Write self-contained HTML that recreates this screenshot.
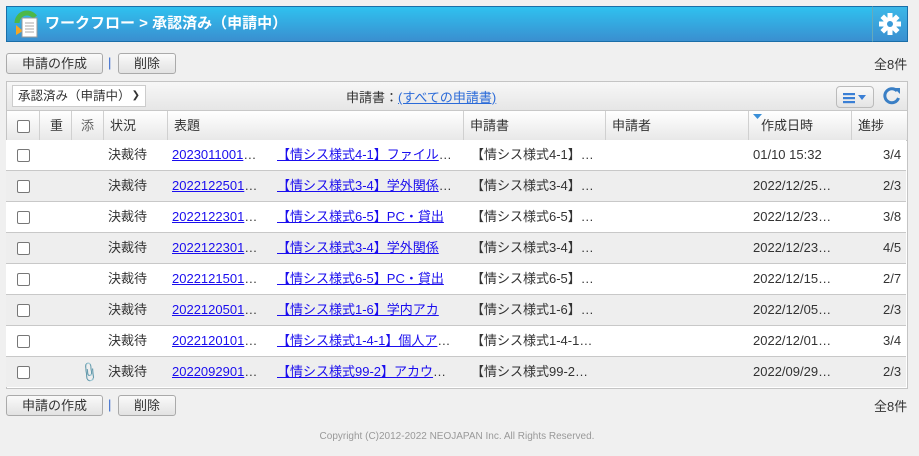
<!DOCTYPE html>
<html><head><meta charset="utf-8"><style>
*{box-sizing:border-box;margin:0;padding:0}
body{width:919px;height:456px;background:#f0f0f0;font-family:"Liberation Sans","Noto Sans CJK JP",sans-serif;font-size:13px;color:#333;position:relative;overflow:hidden}
.a{position:absolute}
.hdr{left:6px;top:6px;width:866px;height:36px;background:linear-gradient(#2fc1ef,#3a8fd0);border:1px solid #1a6ea8;border-right:none}
.gear{left:872px;top:6px;width:36px;height:36px;background:linear-gradient(#3bb8e8,#3a8fd0);border:1px solid #1a6ea8;border-left:1px solid #6ab;}
.ttl{left:45px;top:12px;color:#fff;font-weight:bold;font-size:15px}
.btn{height:21px;border:1px solid #aaa;border-radius:3px;background:linear-gradient(#fafafa,#e2e2e2);text-align:center;line-height:19px;color:#333}
.sep{color:#3366cc}
.tbl{left:6px;top:81px;width:902px;height:308px;border:1px solid #c4c4c4;background:#fff}
.tb{left:0;top:0;width:900px;height:29px;background:linear-gradient(#f7f7f7,#e6e6e6);border-bottom:1px solid #c8c8c8}
.th{left:0;top:29px;width:900px;height:30px;background:linear-gradient(#fff,#e8e8e8);border-bottom:1px solid #c8c8c8}
.th div{position:absolute;top:0;height:29px;line-height:29px;border-left:1px solid #d0d0d0;padding-left:6px}
.row{left:0;width:900px;height:31px;border-bottom:1px solid #c8c8c8;line-height:30px}
.row span{position:absolute;top:0;white-space:nowrap}
.cb{width:13px;height:13px;border:1px solid #777;border-radius:2px;background:#fff;position:absolute}
a{color:#1a0dee;text-decoration:underline}
</style></head><body>
<div class="a hdr"></div>
<div class="a gear"><svg width="34" height="34" viewBox="0 0 34 34"><g transform="translate(17,17)" fill="#fff"><circle r="7"/><g><rect x="-2.5" y="-11" width="5" height="22"/><rect x="-2.5" y="-11" width="5" height="22" transform="rotate(45)"/><rect x="-2.5" y="-11" width="5" height="22" transform="rotate(90)"/><rect x="-2.5" y="-11" width="5" height="22" transform="rotate(135)"/></g><circle r="3" fill="#3a9ad8"/></g></svg></div>
<svg class="a" style="left:13px;top:9px" width="28" height="30" viewBox="0 0 28 30"><path d="M4 14 A10 10 0 0 1 22 8" stroke="#4cb848" stroke-width="5" fill="none"/><path d="M3 16 L3 26 L10 22z" fill="#f5a623"/><rect x="9" y="9" width="15" height="19" fill="#fff" stroke="#999"/><g stroke="#aaa"><line x1="12" y1="14" x2="21" y2="14"/><line x1="12" y1="17" x2="21" y2="17"/><line x1="12" y1="20" x2="21" y2="20"/><line x1="12" y1="23" x2="21" y2="23"/></g></svg>
<div class="a ttl">ワークフロー &gt; 承認済み（申請中）</div>

<div class="a btn" style="left:6px;top:53px;width:97px">申請の作成</div>
<div class="a sep" style="left:108px;top:55px">|</div>
<div class="a btn" style="left:118px;top:53px;width:58px">削除</div>
<div class="a" style="left:874px;top:54px">全8件</div>

<div class="a tbl">
 <div class="a tb">
  <div class="a" style="left:5px;top:3px;width:134px;height:22px;background:#fff;border:1px solid #ccc;line-height:20px;padding-left:5px;font-size:12.5px">承認済み（申請中）<span style="position:absolute;right:5px;font-size:10px">&#10095;</span></div>
  <div class="a" style="left:339px;top:5px">申請書：<a style="color:#2a6ad8">(すべての申請書)</a></div>
  <div class="a" style="left:829px;top:4px;width:38px;height:22px;border:1px solid #bbb;border-radius:4px;background:linear-gradient(#fafafa,#e4e4e4)"><svg width="36" height="20"><g fill="#3a7fd5"><rect x="6" y="6" width="12" height="2.2"/><rect x="6" y="10" width="12" height="2.2"/><rect x="6" y="14" width="12" height="2.2"/><path d="M21 8h8l-4 5z"/></g></svg></div>
  <svg class="a" style="left:875px;top:4px" width="20" height="20" viewBox="0 0 20 20"><path d="M15 5 A7 7 0 1 0 16.5 12" stroke="#3a7fc5" stroke-width="3" fill="none"/><path d="M12 2 L18 2 L18 8z" fill="#3a7fc5"/></svg>
 </div>
 <div class="a th">
  <div style="left:0;width:33px;border-left:none"><span class="cb" style="left:10px;top:9px"></span></div>
  <div style="left:32px;width:32px;padding-left:10px">重</div>
  <div style="left:64px;width:32px;padding-left:9px;color:#666">添</div>
  <div style="left:96px;width:64px">状況</div>
  <div style="left:160px;width:296px">表題</div>
  <div style="left:456px;width:142px">申請書</div>
  <div style="left:598px;width:143px">申請者</div>
  <div style="left:741px;width:103px;padding-left:12px">作成日時<svg style="position:absolute;left:4px;top:3px" width="9" height="6"><path d="M0 0h9l-4.5 5z" fill="#3a8fd8"/></svg></div>
  <div style="left:844px;width:56px">進捗</div>
 </div>
</div>
<div class="a" style="left:6px;top:140px;width:902px">
 <div class="a row" style="top:0;background:#fff"><span class="cb" style="left:11px;top:9px"></span><span style="left:102px">決裁待</span><span style="left:166px"><a>2023011001</a>…</span><span style="left:271px"><a>【情シス様式4-1】ファイル</a>…</span><span style="left:465px">【情シス様式4-1】…</span><span style="left:747px">01/10 15:32</span><span style="left:877px">3/4</span></div>
 <div class="a row" style="top:31px;background:#eee"><span class="cb" style="left:11px;top:9px"></span><span style="left:102px">決裁待</span><span style="left:166px"><a>2022122501</a>…</span><span style="left:271px"><a>【情シス様式3-4】学外関係</a>…</span><span style="left:465px">【情シス様式3-4】…</span><span style="left:747px">2022/12/25…</span><span style="left:877px">2/3</span></div>
 <div class="a row" style="top:62px;background:#fff"><span class="cb" style="left:11px;top:9px"></span><span style="left:102px">決裁待</span><span style="left:166px"><a>2022122301</a>…</span><span style="left:271px"><a>【情シス様式6-5】PC・貸出</a></span><span style="left:465px">【情シス様式6-5】…</span><span style="left:747px">2022/12/23…</span><span style="left:877px">3/8</span></div>
 <div class="a row" style="top:93px;background:#eee"><span class="cb" style="left:11px;top:9px"></span><span style="left:102px">決裁待</span><span style="left:166px"><a>2022122301</a>…</span><span style="left:271px"><a>【情シス様式3-4】学外関係</a></span><span style="left:465px">【情シス様式3-4】…</span><span style="left:747px">2022/12/23…</span><span style="left:877px">4/5</span></div>
 <div class="a row" style="top:124px;background:#fff"><span class="cb" style="left:11px;top:9px"></span><span style="left:102px">決裁待</span><span style="left:166px"><a>2022121501</a>…</span><span style="left:271px"><a>【情シス様式6-5】PC・貸出</a></span><span style="left:465px">【情シス様式6-5】…</span><span style="left:747px">2022/12/15…</span><span style="left:877px">2/7</span></div>
 <div class="a row" style="top:155px;background:#eee"><span class="cb" style="left:11px;top:9px"></span><span style="left:102px">決裁待</span><span style="left:166px"><a>2022120501</a>…</span><span style="left:271px"><a>【情シス様式1-6】学内アカ</a></span><span style="left:465px">【情シス様式1-6】…</span><span style="left:747px">2022/12/05…</span><span style="left:877px">2/3</span></div>
 <div class="a row" style="top:186px;background:#fff"><span class="cb" style="left:11px;top:9px"></span><span style="left:102px">決裁待</span><span style="left:166px"><a>2022120101</a>…</span><span style="left:271px"><a>【情シス様式1-4-1】個人ア</a>…</span><span style="left:465px">【情シス様式1-4-1…</span><span style="left:747px">2022/12/01…</span><span style="left:877px">3/4</span></div>
 <div class="a row" style="top:217px;background:#eee;border-bottom:none;height:30px"><span class="cb" style="left:11px;top:9px"></span><span style="left:75px;color:#6a8fc0;font-size:14px;transform:rotate(35deg)">&#128206;</span><span style="left:102px">決裁待</span><span style="left:166px"><a>2022092901</a>…</span><span style="left:271px"><a>【情シス様式99-2】アカウ</a>…</span><span style="left:465px">【情シス様式99-2…</span><span style="left:747px">2022/09/29…</span><span style="left:877px">2/3</span></div>
</div>

<div class="a btn" style="left:6px;top:395px;width:97px">申請の作成</div>
<div class="a sep" style="left:108px;top:397px">|</div>
<div class="a btn" style="left:118px;top:395px;width:58px">削除</div>
<div class="a" style="left:874px;top:396px">全8件</div>
<div class="a" style="left:0;width:914px;top:431px;text-align:center;font-size:10px;color:#999">Copyright (C)2012-2022 NEOJAPAN Inc. All Rights Reserved.</div>
</body></html>
